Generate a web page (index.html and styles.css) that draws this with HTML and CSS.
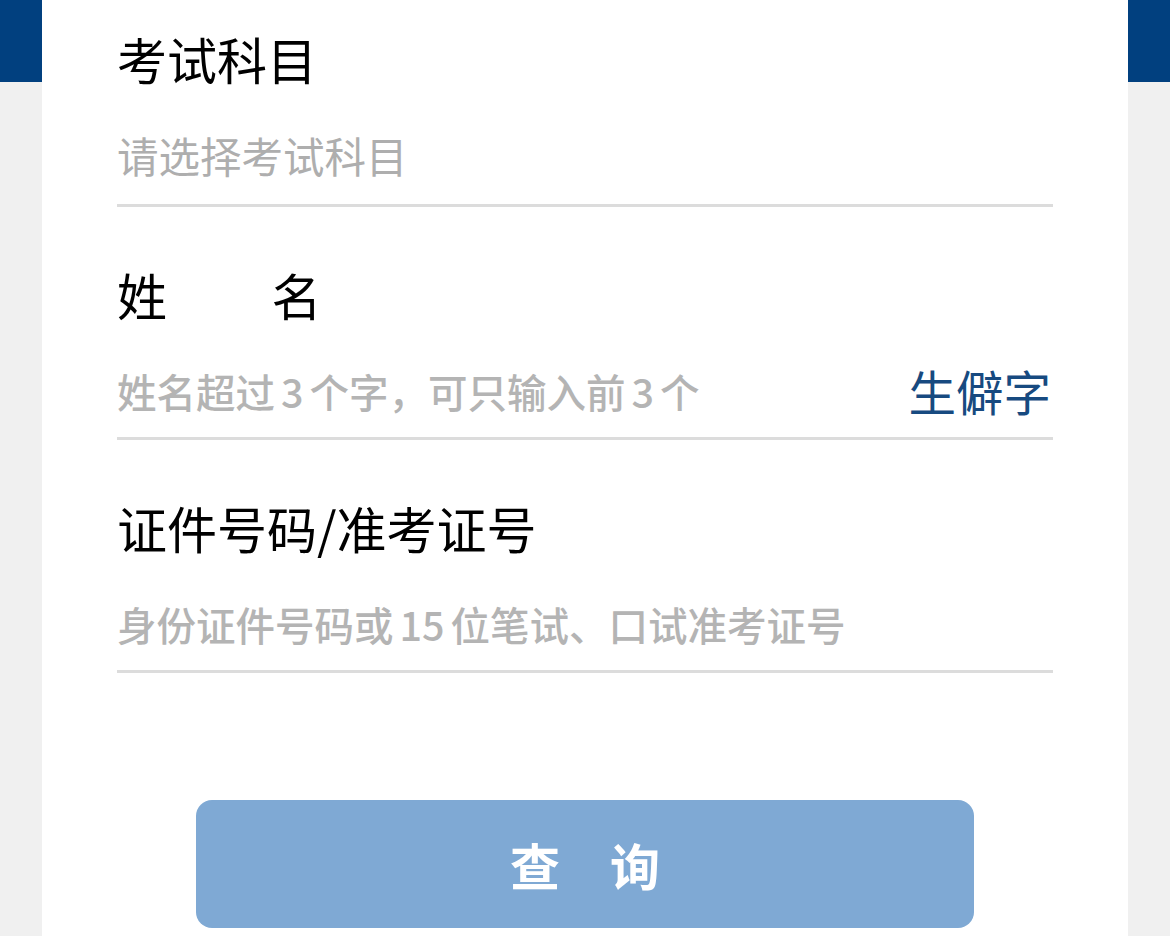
FILE: index.html
```html
<!DOCTYPE html>
<html lang="zh-CN">
<head>
<meta charset="utf-8">
<title>成绩查询</title>
<link rel="stylesheet" href="styles.css">
</head>
<body>
<div class="band"></div>
<main class="card">
  <section class="field">
    <div class="label">考试科目</div>
    <div class="input-row">
      <span class="placeholder select">请选择考试科目</span>
    </div>
  </section>
  <section class="field">
    <div class="label spaced">姓&emsp;&emsp;名</div>
    <div class="input-row">
      <span class="placeholder">姓名超过<span class="num">3</span>个字，可只输入前<span class="num">3</span>个</span>
      <span class="rare">生僻字</span>
    </div>
  </section>
  <section class="field">
    <div class="label">证件号码/准考证号</div>
    <div class="input-row">
      <span class="placeholder">身份证件号码或<span class="num">15</span>位笔试、口试准考证号</span>
    </div>
  </section>
  <div class="actions">
    <button class="submit" type="button">查　询</button>
  </div>
</main>
</body>
</html>
```

FILE: styles.css
```css
html, body {
  margin: 0;
  padding: 0;
}
body {
  background: #f0f0f0;
  font-family: "Noto Sans CJK SC", "Noto Sans", sans-serif;
  height: 936px;
  overflow: hidden;
}
.band {
  height: 82px;
  background: #01407f;
}
.card {
  margin: -82px 42px 0;
  background: #ffffff;
  padding: 0 75px;
  height: 936px;
  box-sizing: border-box;
  overflow: hidden;
}
.field {
  padding: 52px 0 16px;
  border-bottom: 3px solid #dcdcdc;
}
.field:first-child {
  padding-top: 23px;
  padding-bottom: 19px;
}
.label {
  font-size: 50px;
  line-height: 70px;
  color: #000000;
  white-space: nowrap;
}
.label.spaced {
  letter-spacing: 1.5px;
}
.input-row {
  margin-top: 32px;
  height: 60px;
  display: flex;
  align-items: center;
  justify-content: space-between;
}
.placeholder {
  font-size: 39.5px;
  line-height: 60px;
  color: #b4b4b4;
  font-weight: 500;
  white-space: nowrap;
}
.placeholder.select {
  font-size: 41.5px;
  font-weight: 400;
  color: #aeaeae;
}
.num {
  padding: 0 6px;
}
.rare {
  font-size: 47.5px;
  line-height: 60px;
  color: #174a80;
  margin-right: 2px;
}
.actions {
  padding-top: 127px;
  display: flex;
  justify-content: center;
}
.submit {
  width: 778px;
  height: 128px;
  border: none;
  border-radius: 16px;
  background: #7fa9d4;
  color: #ffffff;
  font-family: "Noto Sans CJK SC", sans-serif;
  font-size: 50px;
  font-weight: 700;
  padding: 0;
}
```
